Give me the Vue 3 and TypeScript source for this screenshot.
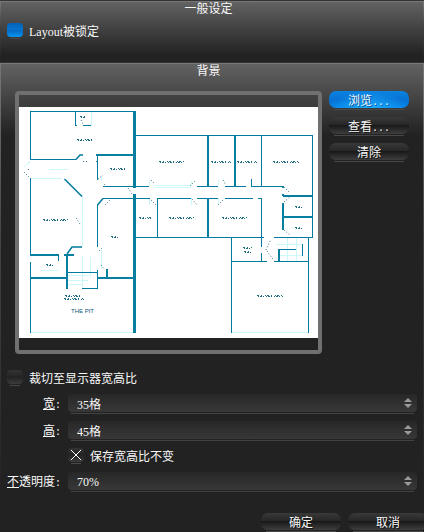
<script setup lang="ts">
import { ref } from 'vue'

interface Mark {
  x: number
  y: number
  w: number
}

interface NumberField {
  value: number
  unit: string
}

const layoutLocked = ref(false)
const cropToDisplay = ref(false)
const keepRatio = ref(true)

const width = ref<NumberField>({ value: 35, unit: '格' })
const height = ref<NumberField>({ value: 45, unit: '格' })
const opacity = ref<NumberField>({ value: 70, unit: '%' })

const show = (field: NumberField): string => `${field.value}${field.unit}`

function step(field: NumberField, delta: number): void {
  field.value = Math.max(0, field.value + delta)
}

function edit(field: NumberField, event: Event): void {
  const parsed = parseInt((event.target as HTMLInputElement).value, 10)
  if (!Number.isNaN(parsed)) field.value = parsed
}

// Room captions are too small to read at this scale, so they are drawn as specks.
const captions: Mark[] = [
  { x: 77, y: 139, w: 15 },
  { x: 80, y: 116, w: 6 },
  { x: 110, y: 168, w: 16 },
  { x: 43, y: 219, w: 25 },
  { x: 111, y: 236, w: 7 },
  { x: 46, y: 264, w: 8 },
  { x: 65, y: 295, w: 16 },
  { x: 64, y: 298, w: 20 },
  { x: 159, y: 161, w: 25 },
  { x: 211, y: 161, w: 20 },
  { x: 237, y: 161, w: 20 },
  { x: 273, y: 161, w: 26 },
  { x: 139, y: 217, w: 12 },
  { x: 169, y: 217, w: 25 },
  { x: 222, y: 217, w: 25 },
  { x: 295, y: 206, w: 7 },
  { x: 295, y: 227, w: 7 },
  { x: 243, y: 247, w: 9 },
  { x: 244, y: 251, w: 7 },
  { x: 257, y: 295, w: 26 }
]
</script>

<template>
  <main class="dialog">
    <section class="panel general">
      <h2>一般设定</h2>
      <label class="check">
        <input v-model="layoutLocked" type="checkbox" class="box blue" />
        <span>Layout被锁定</span>
      </label>
    </section>

    <section class="panel background">
      <h2>背景</h2>

      <div class="picture-row">
        <div class="frame">
          <svg class="plan" viewBox="19 107 299 231" role="img" aria-label="背景">
            <rect x="19" y="107" width="299" height="231" fill="#fff" />
            <g fill="none" stroke="#cdf8fa" stroke-width="1" shape-rendering="crispEdges">
              <path d="M30 332.5H134M231 332.5H309M82.5 195V247M82.5 256V289M90.5 257V277M68 275.5H89M68 280.5H88M68 284.5H82" />
              <path d="M155 185.5H191M155 187.5H191M91.5 112V126M30 178.5H62M30 161.5L24 167M287.5 238V261M296.5 238V261M276 244.5H303M280 255.5H302M261.5 238V245M41 270.5H58M49 169.5H68" />
              <path d="M149 180V186M149 198V205M191 181V186M191 198V205M218 180V186M218 198V204M101 176V181M101 250V268" />
            </g>
            <g fill="none" stroke="#007a9e" stroke-width="1" shape-rendering="crispEdges">
              <path d="M30.5 159.5V111.5H134M30 159.5H76M75.5 111V125.5H77M83 125.5H91M97.5 155V180M103 186.5H134M103 198.5H134M97.5 205V247" />
              <path d="M30.5 178V255M58.5 254V261M30.5 262V333M67 272.5H98M97.5 270V288.5H82" />
              <path d="M135 135.5H312.5V237.5H274M135 186.5H149M197 186.5H218M225 186.5H246M251 186.5H284M251.5 179V187" />
              <path d="M135 198.5H150M157 198.5H191M197 198.5H218M225 198.5H253M258 198.5H261.5V247M261.5 253V261M261.5 135V186M157.5 198V237M135.5 194V237.5H264" />
              <path d="M231.5 238V333M308.5 238V333M231 261.5H267M274 261.5H309M279 249.5H296M302.5 244V256" />
            </g>
            <g fill="none" stroke="#087ea1" stroke-width="2" shape-rendering="crispEdges">
              <path d="M96 155H134M30 255H59M64 255H74M67 254V289M30 278H67M98 278H134M107 269V278M208 135V186M208 198V238M235 135V186" />
              <path d="M283 186V188M283 194V196M283 203V230M283 196H313M283 217H313M279 249V261" />
            </g>
            <path d="M134.500 111V188M134.500 194V333" fill="none" stroke="#087ea1" stroke-width="3" shape-rendering="crispEdges" />
            <path d="M76 159.500L80 155H83M64.500 179L82 196.500M97.500 205L103 198.500M67 254L72 247H82" fill="none" stroke="#007a9e" stroke-width="1.500" />
            <g fill="none" stroke="#31758a" stroke-width="1" stroke-dasharray="1 2">
              <path d="M24 172L30 178M28 169.500H31M83 161.500H87M96 161.500H98M98 179L103 175M104 184L106 186M105 205L111 199M128 188L132 194M151 180L155 184M190 186L196 180M151 200L156 205M192 199L197 205M218 205L224 199M223 180L226 185M284 187L290 193M284 202L290 197M284 230L290 235M266 250L271 239M267 251L275 262M81 120L83 124M76 218L80 224M99 251L103 247M101 265L104 269" />
            </g>
            <g fill="none" stroke="#1f6c84" shape-rendering="crispEdges">
              <template v-for="mark in captions" :key="`${mark.x}-${mark.y}`">
                <path :d="`M${mark.x} ${mark.y + 0.5}h${mark.w}`" stroke-dasharray="2 2 1 3 1 1" />
                <path :d="`M${mark.x + 1} ${mark.y + 1.5}h${mark.w - 1}`" stroke-dasharray="1 1 2 1 1 2" />
              </template>
            </g>
            <text x="71" y="313" class="plan-text">THE PIT</text>
          </svg>
        </div>

        <div class="side-buttons">
          <button type="button" class="pill primary">浏览<span class="half">...</span></button>
          <button type="button" class="pill">查看<span class="half">...</span></button>
          <button type="button" class="pill">清除</button>
        </div>
      </div>

      <label class="check crop">
        <input v-model="cropToDisplay" type="checkbox" class="box" />
        <span>裁切至显示器宽高比</span>
      </label>

      <div class="fields">
        <label for="width"><u>宽</u><span class="half">:</span></label>
        <div class="spin">
          <input id="width" type="text" :value="show(width)" @change="edit(width, $event)" />
          <span class="stepper">
            <button type="button" aria-label="+" @click="step(width, 1)"></button>
            <button type="button" class="down" aria-label="-" @click="step(width, -1)"></button>
          </span>
        </div>

        <label for="height"><u>高</u><span class="half">:</span></label>
        <div class="spin">
          <input id="height" type="text" :value="show(height)" @change="edit(height, $event)" />
          <span class="stepper">
            <button type="button" aria-label="+" @click="step(height, 1)"></button>
            <button type="button" class="down" aria-label="-" @click="step(height, -1)"></button>
          </span>
        </div>

        <label class="check ratio">
          <input v-model="keepRatio" type="checkbox" class="box" />
          <span>保存宽高比不变</span>
        </label>

        <label for="opacity"><u>不</u>透明度<span class="half">:</span></label>
        <div class="spin">
          <input id="opacity" type="text" :value="show(opacity)" @change="edit(opacity, $event)" />
          <span class="stepper">
            <button type="button" aria-label="+" @click="step(opacity, 1)"></button>
            <button type="button" class="down" aria-label="-" @click="step(opacity, -1)"></button>
          </span>
        </div>
      </div>
    </section>

    <footer class="actions">
      <button type="button" class="pill">确定</button>
      <button type="button" class="pill">取消</button>
    </footer>
  </main>
</template>

<style>
body {
  background: #222;
}
</style>

<style scoped>
.dialog,
.dialog input,
.dialog button {
  font-family: "Liberation Serif", "Noto Sans CJK SC", serif;
  font-size: 12px;
  line-height: 16px;
  color: #f8f8f8;
}

.dialog * {
  box-sizing: border-box;
}

.dialog {
  overflow: hidden;
  background: #222;
}

.half {
  font-family: "Liberation Mono", monospace;
  font-size: 10px;
  line-height: 1;
}

.panel {
  position: relative;
  border-top: 1px solid #333;
  box-shadow: inset 0 1px #777;
}

.panel::before,
.panel::after {
  content: "";
  position: absolute;
  top: 1px;
  bottom: 0;
  left: 0;
  width: 1px;
  background: linear-gradient(#777, #444 40%, #222);
}

.panel::after {
  left: auto;
  right: 0;
}

.general {
  padding: 0 7px 24px;
  background: linear-gradient(#636363, #222 54px);
}

.background {
  padding: 0 7px 13px;
  background: linear-gradient(#636363, #222 72px);
}

h2 {
  margin: 0;
  padding-right: 7px;
  font-size: 12px;
  font-weight: 400;
  line-height: 16px;
  text-align: center;
}

.check {
  display: flex;
  align-items: flex-start;
  gap: 6px;
  height: 15px;
}

.check span {
  padding-top: 1px;
}

.general .check {
  margin-top: 6px;
}

.dialog .box {
  appearance: none;
  position: relative;
  flex: none;
  width: 16px;
  height: 14px;
  margin: 0;
  border-radius: 4px;
  background: linear-gradient(#343434, #252525 45%, #222 50%, #3c3c3c);
}

.dialog .box::after {
  content: "";
  position: absolute;
  left: 3px;
  right: 3px;
  bottom: -2px;
  height: 1px;
  background: #484848;
}

.dialog .box:checked::before {
  content: "";
  position: absolute;
  top: 2px;
  left: 3px;
  width: 10px;
  height: 10px;
  background:
    linear-gradient(45deg, transparent 46%, #fff 46%, #fff 54%, transparent 54%),
    linear-gradient(-45deg, transparent 46%, #fff 46%, #fff 54%, transparent 54%);
}

.dialog .box.blue {
  background: linear-gradient(#0562b9, #0874cf 50%, #0669c3 52%, #0797f2);
}

.picture-row {
  display: flex;
  align-items: flex-start;
  gap: 7px;
  margin-top: 12px;
  padding: 0 8px;
}

.frame {
  flex: 1;
  min-width: 0;
  padding: 12px 0;
  border: 4px solid #707070;
  border-radius: 4px;
  background: linear-gradient(#424242, #222 60px);
}

.plan {
  display: block;
  width: 100%;
}

.plan-text {
  font-family: "Liberation Sans", sans-serif;
  font-size: 6px;
  fill: #0b5a75;
}

.side-buttons {
  display: grid;
  gap: 9px;
}

.dialog .pill {
  position: relative;
  width: 80px;
  height: 17px;
  padding: 2px 0 0;
  border: 0;
  border-radius: 7px;
  background: linear-gradient(#393939, #272727 45%, #191919 50%, #3e3e3e);
  text-shadow: 1px 1px #111;
}

.dialog .pill::after {
  content: "";
  position: absolute;
  left: 5px;
  right: 5px;
  bottom: -2px;
  height: 1px;
  background: #484848;
}

.dialog .pill.primary {
  background:
    radial-gradient(ellipse at 50% 110%, #1cb1ff, transparent 70%),
    linear-gradient(#0b83e2, #0772d3 50%, #0582e8);
  text-shadow: 1px 1px #0753a0;
}

.crop {
  margin-top: 16px;
}

.fields {
  display: grid;
  grid-template-columns: 54px minmax(0, 1fr);
  column-gap: 7px;
  row-gap: 9px;
  align-items: center;
  margin-top: 9px;
}

.fields > label:not(.check) {
  height: 18px;
  padding-top: 2px;
  text-align: right;
  white-space: nowrap;
}

.fields u {
  text-underline-offset: 1px;
}

.ratio {
  grid-column: 2;
}

.spin {
  position: relative;
  display: flex;
  align-items: center;
  height: 18px;
  padding-right: 5px;
  border-radius: 4px;
  background: linear-gradient(#272727, #383838);
}

.spin::after {
  content: "";
  position: absolute;
  left: 3px;
  right: 3px;
  bottom: -2px;
  height: 1px;
  background: #424242;
}

.dialog .spin input {
  flex: 1;
  min-width: 0;
  height: 18px;
  padding: 2px 9px 0;
  border: 0;
  outline: 0;
  background: transparent;
}

.stepper {
  display: grid;
  gap: 2px;
}

.dialog .stepper button {
  width: 8px;
  height: 4px;
  padding: 0;
  border: 0;
  background: #999;
  clip-path: polygon(50% 0, 100% 100%, 0 100%);
}

.dialog .stepper .down {
  clip-path: polygon(0 0, 100% 0, 50% 100%);
}

.actions {
  display: flex;
  justify-content: flex-end;
  gap: 7px;
  margin-right: -4px;
  padding: 10px 0 2px;
}
</style>
